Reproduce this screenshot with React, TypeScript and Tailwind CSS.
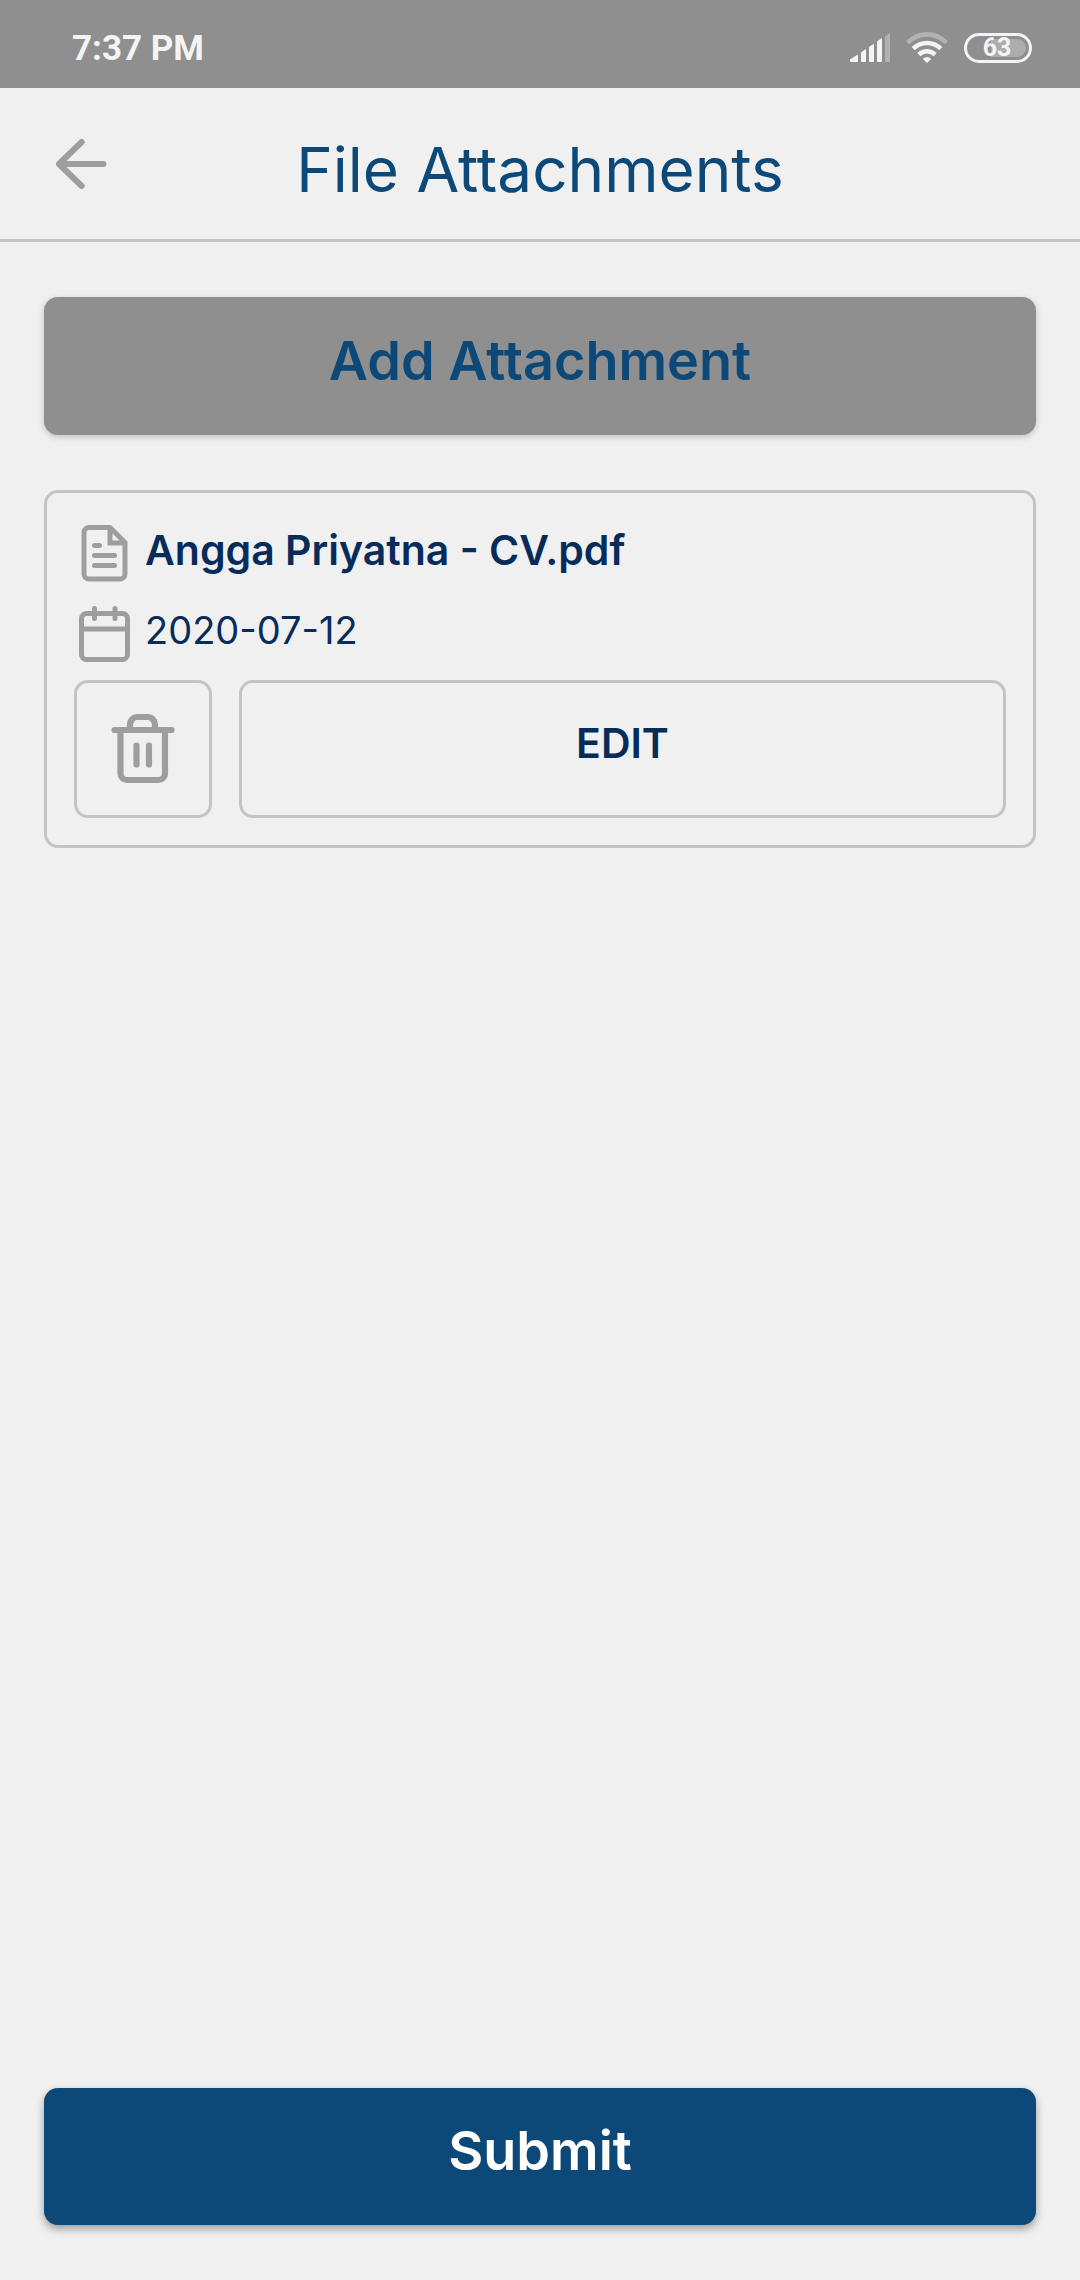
import type { ReactNode } from "react";

function SignalIcon() {
  return (
    <svg width="40" height="30" viewBox="0 0 40 30" fill="#f4f4f4" aria-hidden="true">
      <path d="M0 26.5 7 22q1-.6 1 .6V28q0 1-1 1H1q-1 0-1-1z" />
      <path d="M11 19.5 15 16.5q1-.6 1 .6V28q0 1-1 1h-3q-1 0-1-1z" />
      <path d="M19 14 23 11.3q1-.6 1 .6V28q0 1-1 1h-3q-1 0-1-1z" />
      <path d="M27 8.500 31 5.500q1-.6 1 .6V28q0 1-1 1h-3q-1 0-1-1z" />
      <path d="M35 3.500 39 .6q1-.6 1 .6V28q0 1-1 1h-3q-1 0-1-1z" fill="#b2b2b2" />
    </svg>
  );
}

function WifiIcon() {
  return (
    <svg width="42" height="31" viewBox="0 0 42 31" fill="none" strokeWidth="4.6" aria-hidden="true">
      <path d="M1.6 10.8C12.5-.4 29.500-.4 40.400 10.800" stroke="#b2b2b2" />
      <path d="M7.200 16.600c8-7.500 19.600-7.500 27.600 0" stroke="#f4f4f4" />
      <path d="M12.800 22.600c4.800-4.400 11.600-4.400 16.400 0" stroke="#f4f4f4" />
      <path d="M21 31l-4.200-4.100q4.200-3.600 8.400 0z" fill="#f4f4f4" />
    </svg>
  );
}

function Battery({ level }: { level: number }) {
  return (
    <div className="relative flex h-[30px] w-[68px] items-center justify-center rounded-full border-[3px] border-[#f4f4f4]">
      <div className="absolute inset-[3px] overflow-hidden rounded-full">
        <div className="ml-auto h-full bg-[#adadad]" style={{ width: `${level}%` }} />
      </div>
      <span className="relative pr-0.5 font-[Roboto] text-[25px] leading-none font-bold text-[#f4f4f4]">{level}</span>
    </div>
  );
}

function ArrowLeft() {
  return (
    <svg width="72" height="72" viewBox="0 0 72 72" fill="none" stroke="#9e9e9e" strokeWidth="6" strokeLinecap="round" strokeLinejoin="round" aria-hidden="true">
      <path d="M59.500 36H15M37.700 14 15 36l22.700 22" />
    </svg>
  );
}

function FileIcon() {
  return (
    <svg className="shrink-0" width="60" height="60" viewBox="0 0 60 60" fill="none" stroke="#9e9e9e" strokeWidth="5" aria-hidden="true">
      <path d="M36 4.500H15a5 5 0 0 0-5 5V51a5 5 0 0 0 5 5h31a5 5 0 0 0 5-5V19.500z" />
      <path d="M36 4.500V20h15" />
      <path d="M20.500 22.500h5M20.500 32.500h20M20.500 42.500h20" strokeLinecap="round" />
    </svg>
  );
}

function CalendarIcon() {
  return (
    <svg className="shrink-0" width="60" height="60" viewBox="0 0 60 60" fill="none" stroke="#9e9e9e" strokeWidth="5" strokeLinecap="round" aria-hidden="true">
      <rect x="7.500" y="10.500" width="46" height="46" rx="5" />
      <path d="M7.500 26h46M20.500 5.500v10M41 5.500v10" />
    </svg>
  );
}

function TrashIcon() {
  return (
    <svg width="76" height="76" viewBox="0 0 76 76" fill="none" stroke="#9e9e9e" strokeWidth="6.200" strokeLinecap="round" strokeLinejoin="round" aria-hidden="true">
      <path d="M9.500 19h57" />
      <path d="M25 19v-5.500A7.500 7.500 0 0 1 32.500 6h10A7.500 7.500 0 0 1 50 13.500V19" />
      <path d="M15.500 19v43.500A6.500 6.500 0 0 0 22 69h31.500a6.500 6.500 0 0 0 6.500-6.500V19" />
      <path d="M31.500 34.500v19M44 34.500v19" />
    </svg>
  );
}

function DetailRow({ icon, children }: { icon: ReactNode; children: ReactNode }) {
  return (
    <div className="flex h-20 items-start gap-[11px] pt-[3px]">
      {icon}
      {children}
    </div>
  );
}

export default function App() {
  return (
    <div className="flex min-h-screen flex-col bg-[#f0f0f0] font-[Inter,sans-serif] text-[#072c59]">
      <div className="flex h-[88px] items-center justify-between bg-[#8f8f8f] pt-[7px] pr-12 pl-[72px]">
        <span className="pt-0.5 font-[Roboto] text-[35px] leading-none font-bold text-[#f4f4f4]">7:37 PM</span>
        <div className="flex items-center gap-4">
          <SignalIcon />
          <WifiIcon />
          <Battery level={63} />
        </div>
      </div>

      <header className="grid h-[154px] grid-cols-[72px_1fr_72px] items-center border-b-[3px] border-[#c4c4c4] px-11">
        <button type="button" aria-label="Back">
          <ArrowLeft />
        </button>
        <h1 className="pt-3 text-center text-[62px] leading-none text-[#0c4979]">File Attachments</h1>
      </header>

      <main className="flex flex-1 flex-col gap-[55px] px-11 py-[55px]">
        <button type="button" className="h-[138px] rounded-[14px] bg-[#8f8f8f] pb-3 text-[54px] font-semibold text-[#0c4979] shadow-[0_2px_6px_rgba(0,0,0,0.2)]">
          Add Attachment
        </button>

        <article className="rounded-[14px] border-[3px] border-[#c4c4c4] p-[27px]">
          <DetailRow icon={<FileIcon />}>
            <h2 className="text-[41px] leading-[54px] font-semibold">Angga Priyatna - CV.pdf</h2>
          </DetailRow>
          <DetailRow icon={<CalendarIcon />}>
            <time dateTime="2020-07-12" className="text-[38px] leading-[54px]">2020-07-12</time>
          </DetailRow>
          <div className="flex gap-[27px]">
            <button type="button" aria-label="Delete attachment" className="flex size-[138px] items-center justify-center rounded-[14px] border-[3px] border-[#c4c4c4]">
              <TrashIcon />
            </button>
            <button type="button" className="flex-1 rounded-[14px] border-[3px] border-[#c4c4c4] pb-2.5 text-[41px] font-semibold">
              EDIT
            </button>
          </div>
        </article>

        <button type="submit" className="mt-auto h-[137px] rounded-[14px] bg-[#0c4979] pb-3 text-[54px] font-semibold text-white shadow-[0_4px_8px_rgba(0,0,0,0.35)]">
          Submit
        </button>
      </main>
    </div>
  );
}
